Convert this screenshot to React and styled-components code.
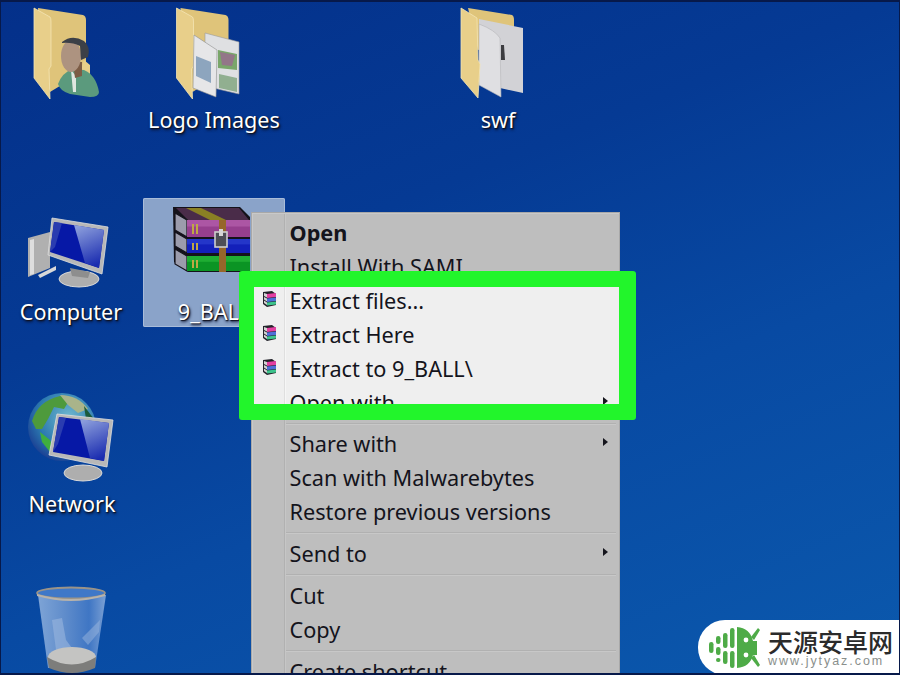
import React from "react";
import styled, { createGlobalStyle } from "styled-components";

const GlobalStyle = createGlobalStyle`
  html, body {
    margin: 0;
    padding: 0;
    background: #0a4a9f;
  }
`;

const Desktop = styled.div`
  position: relative;
  width: 900px;
  height: 675px;
  overflow: hidden;
  font-family: "Noto Sans", "Open Sans", sans-serif;
  background: linear-gradient(158deg, #04308a 0%, #053a94 35%, #084aa3 62%, #0b59ad 100%);

  &::after {
    content: "";
    position: absolute;
    inset: 0;
    box-shadow: inset 1px 2px 0 #07194a, inset -1px -2px 0 #07194a;
    pointer-events: none;
  }
`;

const Shortcut = styled.div`
  position: absolute;
  left: ${(p) => p.$x}px;
  top: ${(p) => p.$y}px;
  width: ${(p) => p.$w}px;
  display: flex;
  flex-direction: column;
  align-items: center;
  box-sizing: border-box;
  ${(p) =>
    p.$selected &&
    `
    background: #8aa3c9;
    box-shadow: inset 0 0 0 1px #a9bcd9;
    border-radius: 2px;
  `}
`;

const Art = styled.svg`
  display: block;
  flex: none;
`;

const Label = styled.span`
  height: 30px;
  line-height: 30px;
  font-size: 21.6px;
  color: #fff;
  white-space: nowrap;
  text-shadow: 1px 1px 1px #10121f, 1px 2px 3px #0a1230;
`;

const Menu = styled.div`
  position: absolute;
  left: 251px;
  top: 212px;
  width: 369px;
  height: 470px;
  box-sizing: border-box;
  padding-top: 4px;
  color: #14141c;
  font-size: 21.7px;
  background:
    linear-gradient(
      to right,
      transparent 33px,
      #b1b1b1 33px,
      #b1b1b1 34px,
      #c6c6c6 34px,
      #c6c6c6 35px,
      transparent 35px
    ),
    #bebebe;
  box-shadow: inset 0 0 0 1px #a8a8a8, inset 2px 2px 0 #c9c9c9;
`;

const Row = styled.div`
  display: grid;
  grid-template-columns: 38.5px 1fr 17px;
  align-items: center;
  height: 34px;
  font-weight: ${(p) => (p.$bold ? 700 : 400)};
  ${(p) =>
    p.$lit &&
    `
    background:
      linear-gradient(to right, transparent 33px, #dfdfdf 33px, #dfdfdf 34px, #f6f6f6 34px, #f6f6f6 35px, transparent 35px),
      #efefef;
  `}
`;

const RowText = styled.span`
  white-space: nowrap;
  line-height: 33px;
  height: 34px;
`;

const RowIcon = styled.svg`
  display: block;
  margin: -4px 0 0 11px;
`;

const SubArrow = styled.span`
  width: 0;
  height: 0;
  margin-top: -4px;
  border-left: 5px solid #14141c;
  border-top: 4px solid transparent;
  border-bottom: 4px solid transparent;
`;

const Separator = styled.div`
  height: 1px;
  margin: ${(p) => p.$before}px 4px ${(p) => p.$after}px 35px;
  background: #b1b1b1;
  box-shadow: 0 1px 0 #c8c8c8;
`;

// the green callout drawn on top of the menu
const Callout = styled.div`
  position: absolute;
  left: 239px;
  top: 271px;
  width: 397px;
  height: 149px;
  box-sizing: border-box;
  border: solid #22f52b;
  border-width: 16px 17px 16px 15px;
  border-radius: 3px;
`;

const Watermark = styled.div`
  position: absolute;
  left: 698px;
  top: 620px;
  width: 202px;
  height: 55px;
  box-sizing: border-box;
  display: flex;
  align-items: center;
  gap: 8px;
  padding-left: 11px;
  background: #fff;
  border-radius: 27px 0 0 27px;
`;

const BrandText = styled.div`
  display: flex;
  flex-direction: column;
  align-items: flex-start;
`;

const BrandName = styled.span`
  font-family: "Noto Sans CJK SC", sans-serif;
  font-weight: 500;
  font-size: 25px;
  line-height: 27px;
  color: #2b2b2b;
  white-space: nowrap;
`;

const BrandUrl = styled.span`
  font-family: "Liberation Sans", sans-serif;
  font-size: 12.5px;
  line-height: 13px;
  letter-spacing: 1.95px;
  color: #8a8f8c;
  white-space: nowrap;
`;

function FolderBack({ dx = 0 }) {
  return (
    <g transform={`translate(${dx} 0)`}>
      <path d="M38 8 L83 15 Q86 16 86 20 L86 70 L50 92 L40 60 Z" fill="#dfc47a" />
      <path d="M34 8 L50 17 Q51 18 51 22 L51 66 L49 69 L50 99 L34 78 Z" fill="#e8cf8a" stroke="#f4e4b4" strokeWidth="0.8" />
    </g>
  );
}

function UserFolder() {
  return (
    <Art width="140" height="105" viewBox="0 0 140 105">
      <FolderBack />
      <path d="M84 60 L90 65 L90 75 L80 72 Z" fill="#e8cf8a" />
      <path d="M58 84 Q62 73 72 69 L84 70 Q96 75 99 92 Q99 97 90 97 L70 94 Q60 91 58 84 Z" fill="#5b9a7d" />
      <path d="M71 70 L73 92 L76 92 L76 76 Z" fill="#dfe7e0" />
      <path d="M73 62 L82 62 L82 76 L75 78 Z" fill="#7c5c45" />
      <ellipse cx="71" cy="56" rx="10" ry="16" fill="#ad9380" />
      <path d="M62 42 Q72 34 84 41 Q91 47 88 57 L81 60 L80 46 Q72 42 62 43 Z" fill="#3c4047" />
    </Art>
  );
}

function LogoFolder() {
  return (
    <Art width="140" height="105" viewBox="144 0 140 105">
      <FolderBack dx={142.5} />
      <path d="M205 33 L239 42 L239 94 L205 86 Z" fill="#dfe0e2" stroke="#9a9a9a" strokeWidth="0.6" />
      <path d="M194 35 L217 50 L216 97 L193 88 Z" fill="#e6e6e8" stroke="#8e8e8e" strokeWidth="0.6" />
      <path d="M196 56 L211 62 L211 83 L196 76 Z" fill="#6f8fb0" opacity="0.75" />
      <path d="M218 50 L237 54 L237 70 L218 68 Z" fill="#7aa66a" />
      <path d="M220 52 L235 55 L232 66 L222 65 Z" fill="#a84fa0" opacity="0.55" />
      <path d="M219 74 L237 78 L237 92 L219 88 Z" fill="#6f9a6e" opacity="0.7" />
    </Art>
  );
}

function SwfFolder() {
  return (
    <Art width="140" height="105" viewBox="428 0 140 105">
      <path d="M468 8 L512 15 Q514 16 514 20 L514 40 L478 50 Z" fill="#dfc47a" />
      <path d="M479 19 L523 28 L523 93 L500 88 L479 85 Z" fill="#d2d2d6" />
      <path d="M479 24 Q495 30 500 38 L501 97 L479 85 Z" fill="#dfdfe2" stroke="#b5b5b8" strokeWidth="0.6" />
      <path d="M501 45 L504 45 L505 60 L501 60 Z" fill="#3c3c40" />
      <path d="M461 8 L477 18 L478 60 L480 64 L478 98 L461 78 Z" fill="#e8cf8a" stroke="#f4e4b4" strokeWidth="0.8" />
    </Art>
  );
}

function ComputerArt({ x, y, w, h }) {
  return (
    <Art width={w} height={h} viewBox={`${x} ${y} ${w} ${h}`}>
      <defs>
        <linearGradient id="pcGlare" x1="0.2" y1="0" x2="0.5" y2="1">
          <stop offset="0" stopColor="#8d9fdc" />
          <stop offset="1" stopColor="#1a2cb0" />
        </linearGradient>
      </defs>
      <path d="M28 238 L50 232 L50 268 L28 277 Z" fill="#b0b0b0" />
      <path d="M30 240 L34 239 L34 274 L30 275 Z" fill="#dedede" />
      <path d="M38 275 L56 266 L56 270 L40 278 Z" fill="#d8d8d8" />
      <ellipse cx="79" cy="279" rx="20" ry="8" fill="#aeaeae" stroke="#d8d8d8" strokeWidth="1" />
      <path d="M70 268 L90 272 L88 278 L72 276 Z" fill="#8e8e8e" />
      <path d="M52 218 L108 227 L102 274 L48 255 Z" fill="#b8b8b8" stroke="#dedede" strokeWidth="0.8" />
      <path d="M54 222 L104 230 L99 268 L50 252 Z" fill="#0618a6" />
      <path d="M74 225 L104 230 L99 268 L85 263 Z" fill="url(#pcGlare)" />
      <path d="M54 222 L62 223 L55 247 L50 252 Z" fill="#2a3cb0" />
    </Art>
  );
}

function NetworkArt({ x, y, w, h }) {
  return (
    <Art width={w} height={h} viewBox={`${x} ${y} ${w} ${h}`}>
      <defs>
        <radialGradient id="globeSea" cx="0.6" cy="0.35" r="0.75">
          <stop offset="0" stopColor="#6fb7cf" />
          <stop offset="0.6" stopColor="#2c7ab0" />
          <stop offset="1" stopColor="#16308c" />
        </radialGradient>
        <linearGradient id="netGlare" x1="0.2" y1="0" x2="0.5" y2="1">
          <stop offset="0" stopColor="#8d9fdc" />
          <stop offset="1" stopColor="#1a2cb0" />
        </linearGradient>
      </defs>
      <circle cx="62" cy="427" r="34" fill="url(#globeSea)" />
      <path d="M32 421 Q38 401 60 396 L70 399 L64 409 L54 407 L48 419 L42 429 L36 429 Z" fill="#4e9a3c" />
      <path d="M60 395 Q78 395 88 409 L78 413 L68 405 Z" fill="#a9b48a" />
      <path d="M40 432 L50 440 L56 456 L50 452 L42 442 Z" fill="#3fae3f" />
      <path d="M84 406 L94 419 L86 419 Z" fill="#1b5a3c" />
      <ellipse cx="83" cy="473" rx="19" ry="8" fill="#aeaeae" stroke="#d8d8d8" strokeWidth="1" />
      <path d="M57 414 L113 420 L107 467 L49 455 Z" fill="#b8b8b8" stroke="#dedede" strokeWidth="0.8" />
      <path d="M59 417 L109 423 L104 461 L53 452 Z" fill="#0618a6" />
      <path d="M80 419 L109 423 L104 461 L90 458 Z" fill="url(#netGlare)" />
      <path d="M59 417 L66 418 L58 444 L53 452 Z" fill="#2a3cb0" />
    </Art>
  );
}

function TrashArt({ x, y, w, h }) {
  return (
    <Art width={w} height={h} viewBox={`${x} ${y} ${w} ${h}`}>
      <defs>
        <linearGradient id="binGlass" x1="0" x2="1" y1="0" y2="0">
          <stop offset="0" stopColor="#7ea4d6" />
          <stop offset="0.4" stopColor="#5f8ccb" />
          <stop offset="0.75" stopColor="#3f76c4" />
          <stop offset="1" stopColor="#7ba0d4" />
        </linearGradient>
      </defs>
      <path d="M38 595 L106 595 L95 668 L48 668 Z" fill="url(#binGlass)" />
      <ellipse cx="71" cy="593" rx="34" ry="5.5" fill="#3f78c8" stroke="#9a9388" strokeWidth="1.8" />
      <path d="M37 594 Q71 604 105 594 L105 596 Q71 606 37 596 Z" fill="#b8b3ab" />
      <path d="M52 620 L62 618 L66 640 L72 648 L56 650 Z" fill="#9ab6dd" opacity="0.6" />
      <path d="M82 638 L100 620 L99 632 L88 645 Z" fill="#9ab6dd" opacity="0.5" />
      <ellipse cx="72" cy="657" rx="24" ry="10" fill="#c4c4c2" />
      <path d="M47 657 Q72 672 96 657 L95 668 Q72 678 49 668 Z" fill="#7d7d7b" />
    </Art>
  );
}

function RarArt({ x, y, w, h }) {
  const book = (top, height, color, light) => (
    <g>
      <path d={`M175 ${top} L187 ${top + 7} L187 ${top + 7 + height} L175 ${top + height} Z`} fill="#9c9cac" stroke="#15131c" strokeWidth="1.2" />
      <rect x="187" y={top + 7} width="63" height={height} fill={color} />
      <rect x="187" y={top + 7} width="63" height={height / 2.6} fill={light} opacity="0.45" />
      <rect x="192" y={top + 11} width="2" height={height - 7} fill="#c0a844" />
      <rect x="196" y={top + 11} width="2" height={height - 7} fill="#c0a844" />
    </g>
  );
  return (
    <Art width={w} height={h} viewBox={`${x} ${y} ${w} ${h}`}>
      <path d="M173 207 L240 207 L250 217 L250 272 L188 272 L174 262 Z" fill="#14121a" />
      <path d="M176 208 L239 208 L249 220 L188 220 Z" fill="#4a2c49" />
      <path d="M186 208 L201 208 L226 220 L210 220 Z" fill="#8a8024" />
      {book(213, 17, "#963f8e", "#c873bf")}
      {book(232, 14, "#1320ba", "#3a52dc")}
      {book(249, 15, "#0b9424", "#38cc46")}
      <rect x="219" y="220" width="7" height="52" fill="#96662a" />
      <rect x="215" y="232" width="12" height="15" fill="#4e4e56" stroke="#cfcfcf" strokeWidth="1.6" />
      <rect x="219" y="229" width="4" height="7" fill="#d6d6d6" />
    </Art>
  );
}

function RarStack() {
  return (
    <RowIcon width="16" height="18" viewBox="0 0 16 18">
      <path d="M1 2 L10 1 L14 4 L14 15 L5 17 L1 14 Z" fill="#23222a" />
      <path d="M5 4 L14 3 L14 7 L5 8 Z" fill="#e43fa2" />
      <path d="M5 8.5 L14 7.5 L14 11 L5 12 Z" fill="#4e6fd8" />
      <path d="M5 12.5 L14 11.5 L14 14.5 L5 15.5 Z" fill="#3cc48c" />
      <path d="M2 3 L5 4 L5 15 L2 13 Z" fill="#d4d4d4" />
      <path d="M2 6.5 L5 8 M2 10 L5 12" stroke="#23222a" strokeWidth="1" />
    </RowIcon>
  );
}

function BrandLogo() {
  return (
    <svg width="51" height="42" viewBox="709 626 51 42" style={{ flex: "none" }}>
      <g fill="#4eab47">
        <rect x="709" y="641" width="4.5" height="11" rx="2.2" />
        <rect x="716" y="635" width="4.5" height="8" rx="2.2" />
        <rect x="716" y="646" width="4.5" height="8" rx="2.2" />
        <rect x="716" y="657" width="4.5" height="4" rx="2" />
        <rect x="723" y="632" width="4.5" height="15" rx="2.2" />
        <rect x="723" y="650" width="4.5" height="13" rx="2.2" />
        <rect x="730" y="627" width="4.5" height="20" rx="2.2" />
        <rect x="730" y="650" width="4.5" height="17" rx="2.2" />
        <path d="M737 626 Q750 627 753 640 L757 640 L757 654 L753 654 Q750 666 737 667 Z" />
        <path d="M751 636 L758 627 L760 629 L754 639 Z" />
        <path d="M751 657 L758 666 L760 664 L754 654 Z" />
      </g>
      <circle cx="746" cy="639" r="2.4" fill="#fff" />
      <circle cx="746" cy="654" r="2.4" fill="#fff" />
    </svg>
  );
}

function Item({ children, icon, arrow, bold, lit }) {
  return (
    <Row $bold={bold} $lit={lit}>
      <span>{icon && <RarStack />}</span>
      <RowText>{children}</RowText>
      {arrow && <SubArrow />}
    </Row>
  );
}

function App() {
  return (
    <Desktop>
      <GlobalStyle />

      <Shortcut $x={0} $y={0} $w={140}>
        <UserFolder />
      </Shortcut>
      <Shortcut $x={144} $y={0} $w={140}>
        <LogoFolder />
        <Label>Logo Images</Label>
      </Shortcut>
      <Shortcut $x={428} $y={0} $w={140}>
        <SwfFolder />
        <Label>swf</Label>
      </Shortcut>
      <Shortcut $x={1} $y={205} $w={140}>
        <ComputerArt x={1} y={205} w={140} h={92} />
        <Label>Computer</Label>
      </Shortcut>
      <Shortcut $x={143} $y={198} $w={142} $selected>
        <RarArt x={143} y={198} w={142} h={99} />
        <Label>9_BALL</Label>
      </Shortcut>
      <Shortcut $x={2} $y={390} $w={140}>
        <NetworkArt x={2} y={390} w={140} h={99} />
        <Label>Network</Label>
      </Shortcut>
      <Shortcut $x={1} $y={580} $w={140}>
        <TrashArt x={1} y={580} w={140} h={95} />
      </Shortcut>

      <Menu>
        <Item bold>Open</Item>
        <Item>Install With SAMI</Item>
        <Item lit icon>Extract files...</Item>
        <Item lit icon>Extract Here</Item>
        <Item lit icon>Extract to 9_BALL\</Item>
        <Item lit arrow>Open with</Item>
        <Separator $before={3} $after={3} />
        <Item arrow>Share with</Item>
        <Item>Scan with Malwarebytes</Item>
        <Item>Restore previous versions</Item>
        <Separator $before={3} $after={4} />
        <Item arrow>Send to</Item>
        <Separator $before={3} $after={4} />
        <Item>Cut</Item>
        <Item>Copy</Item>
        <Separator $before={3} $after={4} />
        <Item>Create shortcut</Item>
      </Menu>

      <Callout />

      <Watermark>
        <BrandLogo />
        <BrandText>
          <BrandName>天源安卓网</BrandName>
          <BrandUrl>www.jytyaz.com</BrandUrl>
        </BrandText>
      </Watermark>
    </Desktop>
  );
}

export default App;
